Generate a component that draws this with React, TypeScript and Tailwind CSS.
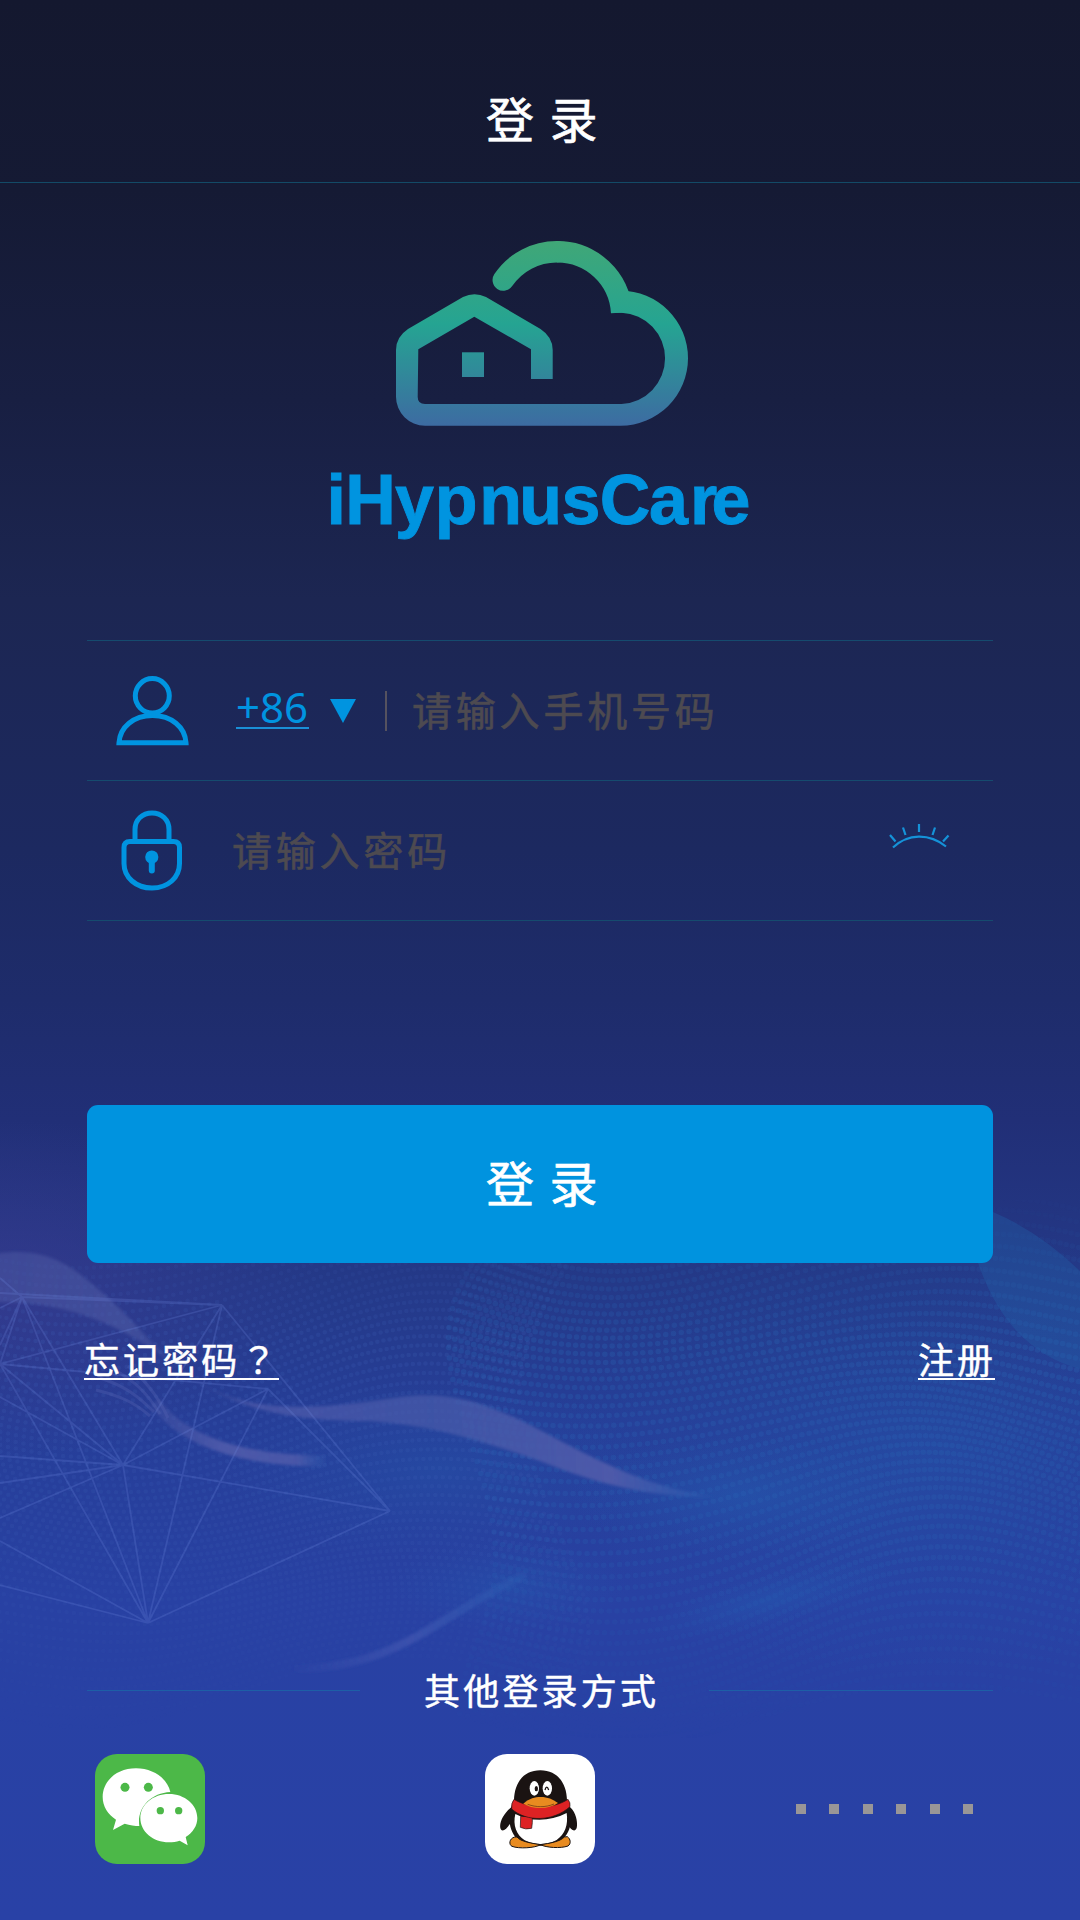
import React from "react";

/* Warped lattice of dots that forms the halftone waves of the backdrop. */
function wavePath(x0: number, x1: number, y0: number, y1: number, du: number, dv: number, phase: number) {
  let d = "";
  for (let v = y0; v < y1; v += dv) {
    for (let u = x0; u < x1; u += du) {
      const x = u + 26 * Math.sin(v / 62 + phase) + 12 * Math.sin(u / 95 + v / 120);
      const y = v + 30 * Math.sin(u / 105 + phase) + 14 * Math.cos(v / 70 - u / 140);
      d += `M${x.toFixed(1)} ${y.toFixed(1)}h.1`;
    }
  }
  return d;
}

const LEFT_DOTS = wavePath(-60, 560, 1240, 1700, 7, 8, 0.6);
const RIGHT_DOTS = wavePath(480, 1140, 1220, 1720, 7, 10, 2.1);

const NET =
  "M222 1305L390 1511M268 1389L390 1511M123 1465L390 1511M148 1623L390 1511" +
  "M22 1297L222 1305M0 1293L222 1305M22 1297L123 1465M22 1297L148 1623M0 1364L123 1465M0 1364L148 1623" +
  "M123 1465L148 1623M222 1305L148 1623M268 1389L148 1623M268 1389L123 1465M222 1305L123 1465" +
  "M0 1364L222 1305M0 1364L268 1389M22 1297L0 1278M22 1297L0 1345M22 1297L0 1364M22 1297L0 1308" +
  "M123 1465L0 1456M123 1465L0 1483M123 1465L0 1518M123 1465L0 1397M148 1623L0 1541M148 1623L0 1585";

function Backdrop() {
  return (
    <svg className="absolute inset-0" width="1080" height="1920" viewBox="0 0 1080 1920" fill="none" aria-hidden="true">
      <defs>
        <radialGradient id="glow">
          <stop offset="0" stopColor="#2262b4" stopOpacity=".6" />
          <stop offset=".5" stopColor="#2262b4" stopOpacity=".25" />
          <stop offset="1" stopColor="#2262b4" stopOpacity="0" />
        </radialGradient>
        <radialGradient id="violet">
          <stop offset="0" stopColor="#3c3a90" stopOpacity=".6" />
          <stop offset="1" stopColor="#3c3a90" stopOpacity="0" />
        </radialGradient>
        <linearGradient id="fade" x1="0" y1="1210" x2="0" y2="1740" gradientUnits="userSpaceOnUse">
          <stop offset="0" stopColor="#fff" stopOpacity=".1" />
          <stop offset=".25" stopColor="#fff" />
          <stop offset=".65" stopColor="#fff" stopOpacity=".7" />
          <stop offset="1" stopColor="#fff" stopOpacity="0" />
        </linearGradient>
        <mask id="m" maskUnits="userSpaceOnUse" x="0" y="1200" width="1080" height="560">
          <rect y="1200" width="1080" height="560" fill="url(#fade)" />
        </mask>
        <linearGradient id="ribbon" x1="0" y1="0" x2="720" y2="0" gradientUnits="userSpaceOnUse">
          <stop offset="0" stopColor="#5360a8" stopOpacity=".4" />
          <stop offset=".18" stopColor="#5360a8" stopOpacity=".5" />
          <stop offset=".25" stopColor="#5360a8" stopOpacity=".2" />
          <stop offset=".35" stopColor="#515bab" stopOpacity=".7" />
          <stop offset=".6" stopColor="#4a5cab" stopOpacity=".65" />
          <stop offset=".85" stopColor="#4f5aaa" stopOpacity=".95" />
          <stop offset="1" stopColor="#2a60b4" stopOpacity=".4" />
        </linearGradient>
        <linearGradient id="lower" x1="150" y1="0" x2="335" y2="0" gradientUnits="userSpaceOnUse">
          <stop offset="0" stopColor="#4a58a8" stopOpacity=".3" />
          <stop offset=".4" stopColor="#505bab" stopOpacity=".9" />
          <stop offset=".8" stopColor="#505bab" stopOpacity=".8" />
          <stop offset="1" stopColor="#2a60b4" stopOpacity="0" />
        </linearGradient>
        <linearGradient id="tail" x1="290" y1="0" x2="530" y2="0" gradientUnits="userSpaceOnUse">
          <stop offset="0" stopColor="#4055b0" stopOpacity="0" />
          <stop offset=".5" stopColor="#4055b0" stopOpacity=".75" />
          <stop offset="1" stopColor="#2a60b4" stopOpacity=".3" />
        </linearGradient>
        <filter id="soft" x="-10%" y="-10%" width="120%" height="120%">
          <feGaussianBlur stdDeviation="1.6" />
        </filter>
      </defs>
      <ellipse cx="0" cy="1290" rx="320" ry="170" fill="url(#violet)" />
      <ellipse cx="920" cy="1450" rx="360" ry="230" fill="url(#glow)" opacity=".5" />
      <ellipse cx="740" cy="1495" rx="170" ry="60" fill="url(#glow)" opacity=".65" />
      <ellipse cx="440" cy="1470" rx="220" ry="90" fill="url(#glow)" opacity=".45" />
      <ellipse cx="510" cy="1585" rx="120" ry="45" fill="url(#glow)" opacity=".5" />
      <ellipse cx="770" cy="1600" rx="130" ry="26" fill="url(#glow)" opacity=".6" transform="rotate(-14 770 1600)" />
      <g mask="url(#m)" strokeLinecap="round">
        <path d={LEFT_DOTS} stroke="#4063b8" strokeWidth="4.5" opacity=".2" />
        <path d={RIGHT_DOTS} stroke="#2b6cba" strokeWidth="5.5" opacity=".26" />
      </g>
      <path d="M978 1263L993 1212Q1040 1232 1080 1271V1369Q1008 1350 978 1263Z" fill="#2262a8" opacity=".35" />
      <g filter="url(#soft)">
        <path
          d="M-5 1254C45 1246 70 1264 105 1295C145 1330 165 1365 215 1391C270 1416 340 1406 400 1397C445 1391 480 1400 530 1425C590 1456 640 1486 715 1497C650 1497 600 1485 540 1461C480 1440 430 1425 370 1421C290 1421 240 1410 190 1377C150 1345 90 1300 -5 1302Z"
          fill="url(#ribbon)"
        />
        <path d="M155 1402C175 1432 225 1461 325 1461" stroke="url(#lower)" strokeWidth="11" />
      </g>
      <path d="M112 1368C135 1382 145 1390 160 1414M128 1366C142 1378 156 1392 168 1418M100 1378C125 1386 138 1396 154 1412M96 1390C120 1396 134 1402 150 1416" stroke="#4f5fae" strokeWidth="3" opacity=".4" />
      <g filter="url(#soft)">
        <path d="M290 1669C400 1668 430 1620 525 1575" stroke="url(#tail)" strokeWidth="8" />
      </g>
      <path d={NET} stroke="#6c86dc" strokeWidth="1.8" opacity=".24" />
    </svg>
  );
}

function Logo() {
  return (
    <svg width="440" height="320" viewBox="320 230 440 320" role="img">
      <defs>
        <linearGradient id="brand" x1="0" y1="241" x2="0" y2="426" gradientUnits="userSpaceOnUse">
          <stop offset="0" stopColor="#40a777" />
          <stop offset=".45" stopColor="#25a492" />
          <stop offset="1" stopColor="#3d6ba2" />
        </linearGradient>
      </defs>
      <path
        d="M552.7 379V350Q552.7 337 540.5 329L486 297Q474.5 291.5 463 297L408 329Q396 337 396 350V396.7A29 29 0 0 0 425 425.7H620.5A67.5 67.5 0 0 0 620.5 290.7H612.5V312.7H621.5A45.7 45.7 0 0 1 621.5 404H425Q417.7 404 417.7 397L418.3 349.3L474.3 316.7L531 349.3V379Z"
        fill="url(#brand)"
      />
      <path d="M462 352.3H484V377H462Z" fill="url(#brand)" />
      <path d="M556.7 251.7A64.5 64.5 0 0 1 621.7 312.7" fill="none" stroke="url(#brand)" strokeWidth="21.5" />
      <path d="M503.3 280A64.5 64.5 0 0 1 557 251.7" fill="none" stroke="url(#brand)" strokeWidth="21.5" strokeLinecap="round" />
      <text
        x="326.5 345.2 395 434.8 479.2 519.3 561.5 599.8 649 690 711.500"
        y="523.5"
        className='font-["Liberation_Sans",sans-serif] text-[70px] font-bold'
        fill="#0094e0"
        stroke="#0094e0"
        strokeWidth=".9"
      >
        iHypnusCare
      </text>
    </svg>
  );
}

function UserIcon() {
  return (
    <svg width="73" height="70" viewBox="116.5 676 73 70" fill="none" stroke="#0094e0" strokeWidth="5">
      <ellipse cx="152.800" cy="695.800" rx="17" ry="17.200" />
      <path d="M119.500 742.700C120.500 727 134 715.500 153 715.500S185.500 727 186.500 742.700Z" />
    </svg>
  );
}

function LockIcon() {
  return (
    <svg width="62" height="81" viewBox="121 810.5 62 81" fill="none" stroke="#0094e0" strokeWidth="5">
      <path d="M135 841V830C135 820 142.500 813.500 152 813.500S169 820 169 830V841" />
      <path d="M130 842H173.500Q179.500 842 179.500 848V864C179.500 878 168 888.500 152 888.500S124 878 124 864V848Q124 842 130 842Z" />
      <circle cx="151.800" cy="857.500" r="6.600" fill="#0094e0" stroke="none" />
      <path d="M151.800 860V871" strokeWidth="6" strokeLinecap="round" />
    </svg>
  );
}

function ClosedEye() {
  return (
    <svg width="62" height="26" viewBox="888 823 62 26" fill="none" stroke="#1592d8" strokeWidth="2.2">
      <path d="M893 847.500C908 833.500 929 833 946 846.500M890 835L895.500 841.500M903 827.500L905.500 835M919 824V832M935 827.500L932.500 835M948.500 835.500L943 841.500" />
    </svg>
  );
}

function WeChat() {
  return (
    <svg width="110" height="110" viewBox="45 41 330 330">
      <rect x="45" y="41" width="330" height="330" rx="66" fill="#4cb848" />
      <path d="M168 84C110 84 68 122 68 170C68 199 84 222 108 238L99 269L134 250C150 255 165 257 178 257C170 205 210 158 271 155C262 114 219 84 168 84Z" fill="#fff" />
      <path d="M267 161C219 161 181 193 181 233C181 274 219 306 267 306C278 306 289 304 299 301L323 315L317 290C339 276 352 256 352 233C352 193 314 161 267 161Z" fill="#fff" />
      <g fill="#4cb848">
        <circle cx="135" cy="141" r="13.500" />
        <circle cx="205" cy="141" r="13.500" />
        <circle cx="241" cy="211" r="11" />
        <circle cx="296" cy="211" r="11" />
      </g>
    </svg>
  );
}

function Penguin() {
  return (
    <svg width="110" height="110" viewBox="45 41 330 330">
      <rect x="45" y="41" width="330" height="330" rx="66" fill="#fff" />
      <path d="M129 197C105 213 87 244 91 263C94 277 108 270 120 250ZM296 197C318 213 324 246 320 263C315 277 303 270 292 250Z" fill="#1a1312" />
      <path d="M211 90C161 90 133 127 132 180C113 216 112 266 141 295C176 323 246 323 280 295C309 266 309 216 291 180C290 127 261 90 211 90Z" fill="#1a1312" />
      <path d="M136 221C128 254 139 284 164 300C192 315 232 315 260 299C285 281 295 254 290 218C240 244 182 245 136 221Z" fill="#fff" />
      <path d="M134 290C117 295 116 313 126 318C147 326 195 323 212 313C187 309 151 304 141 290ZM292 289C302 296 304 310 294 317C271 325 229 322 211 313C239 309 270 304 283 290Z" fill="#e88b20" stroke="#1a1312" strokeWidth="3" />
      <path d="M152 228L151 261Q167 269 185 264Q188 247 187 229Z" fill="#dd2224" stroke="#1a1312" strokeWidth="2" />
      <path d="M132 177C178 205 248 207 294 177Q302 187 300 199C250 244 170 246 125 206Q123 188 132 177Z" fill="#dd2224" stroke="#1a1312" strokeWidth="2" />
      <path d="M160 190C179 174 194 170 212 170C233 170 248 177 264 188C249 198 232 203 211 203C190 203 174 198 160 190Z" fill="#e88b20" />
      <path d="M173 192C198 201 226 202 252 191" fill="none" stroke="#5b2a12" strokeWidth="2" />
      <ellipse cx="193" cy="144" rx="14" ry="22" fill="#fff" />
      <ellipse cx="232" cy="144" rx="14" ry="22" fill="#fff" />
      <ellipse cx="199" cy="145" rx="5" ry="8" fill="#1a1312" />
      <path d="M225 149Q230 132 236 149" fill="none" stroke="#1a1312" strokeWidth="4" />
    </svg>
  );
}

export default function App() {
  return (
    <div
      className={
        'relative h-[1920px] w-[1080px] overflow-hidden bg-[linear-gradient(180deg,#14182f_0px,#151a34_190px,#181f42_400px,#1c2652_600px,#1c2960_850px,#1e2c6b_1000px,#212f77_1120px,#243988_1280px,#263e98_1420px,#2841a3_1600px,#2941a6_1920px)] font-["Noto_Sans_CJK_SC",sans-serif] text-white'
      }
    >
      <Backdrop />
      <div className="relative flex flex-col">
        <header className="flex h-[183px] items-center justify-center border-b border-[#134a66] pt-[51px]">
          <h1 className="pl-[19px] text-[48px] leading-[60px] tracking-[15.5px] [-webkit-text-stroke:0.7px_white]">登录</h1>
        </header>

        <div className="mt-[47px] flex justify-center">
          <Logo />
        </div>

        <main className="flex flex-col px-[87px] pt-[90px]">
          <div className="border-t border-[#154b6e]">
            <div className="flex h-[140px] items-center border-b border-[#154b6e] pl-[29px]">
              <UserIcon />
              <span className='mb-[5px] ml-[47px] h-[42px] w-[73px] border-b-2 border-[#1a8fd6] font-["Noto_Sans",sans-serif] text-[42px] leading-[40px] whitespace-nowrap text-[#0094e0]'>+86</span>
              <svg className="ml-[21px]" width="26" height="24" viewBox="0 0 26 24" fill="#0094e0">
                <path d="M0 0H26L13 24Z" />
              </svg>
              <span className="ml-[29px] h-10 w-0.5 bg-[#55525f]" />
              <span className="ml-[25px] pb-[3px] text-[40px] leading-[44px] tracking-[3.8px] text-[#4d4a50] [-webkit-text-stroke:0.6px_#4d4a50]">请输入手机号码</span>
            </div>
            <div className="flex h-[140px] items-center border-b border-[#154b6e] pr-[43px] pl-[34px]">
              <LockIcon />
              <span className="ml-[49px] pb-[3px] text-[40px] leading-[44px] tracking-[3.8px] text-[#4d4a50] [-webkit-text-stroke:0.6px_#4d4a50]">请输入密码</span>
              <span className="mb-[29px] ml-auto">
                <ClosedEye />
              </span>
            </div>
          </div>

          <button className="mt-[184px] flex h-[158px] items-center justify-center rounded-[11px] bg-[#0093df] pb-[7px] pl-[19px] text-[48px] tracking-[15.5px] [-webkit-text-stroke:0.7px_white]">
            登录
          </button>

          <div className="-mx-[3px] mt-[76px] flex justify-between text-[36px] leading-[39px] tracking-[3.1px] [-webkit-text-stroke:0.5px_white]">
            <a className="h-[41px] w-[195px] border-b-2 border-white whitespace-nowrap">
              忘记密码<span className='font-["Noto_Sans_CJK_TC",sans-serif]' lang="zh-Hant">？</span>
            </a>
            <a className="mr-px h-[41px] w-[77px] border-b-2 border-white whitespace-nowrap">注册</a>
          </div>

          <div className="mt-[290px] flex h-10 items-center">
            <span className="h-px w-[273px] bg-[#1d5fa6]" />
            <span className="ml-[64px] pb-[2px] text-[36px] leading-[37px] tracking-[3.2px] whitespace-nowrap [-webkit-text-stroke:0.5px_white]">其他登录方式</span>
            <span className="ml-auto h-px w-[284px] bg-[#1d5fa6]" />
          </div>

          <div className="mt-[44px] flex items-center pl-2">
            <WeChat />
            <span className="ml-[280px]">
              <Penguin />
            </span>
            <div className="ml-[201px] flex w-[177px] justify-between">
              <i className="size-2.5 bg-[#999697]" />
              <i className="size-2.5 bg-[#999697]" />
              <i className="size-2.5 bg-[#999697]" />
              <i className="size-2.5 bg-[#999697]" />
              <i className="size-2.5 bg-[#999697]" />
              <i className="size-2.5 bg-[#999697]" />
            </div>
          </div>
        </main>
      </div>
    </div>
  );
}
